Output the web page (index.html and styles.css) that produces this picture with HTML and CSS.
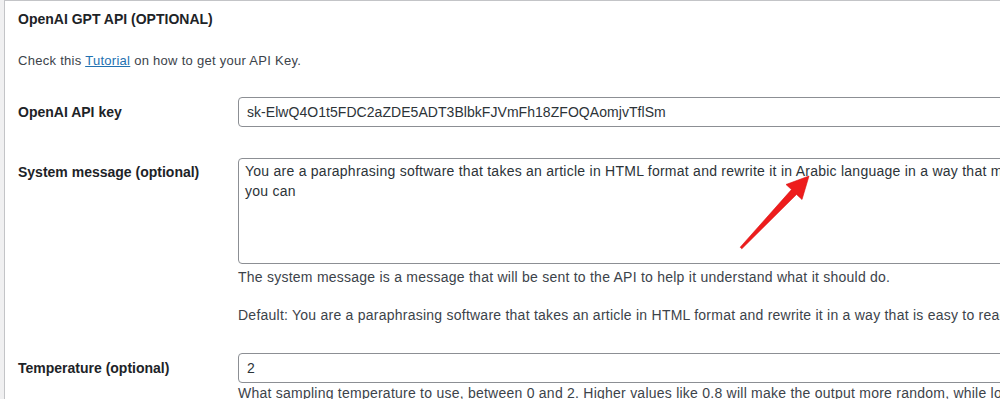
FILE: index.html
```html
<!DOCTYPE html>
<html>
<head>
<meta charset="utf-8">
<link rel="stylesheet" href="styles.css">
</head>
<body>
<div class="page">
  <div class="postbox">
    <h2 class="box-title">OpenAI GPT API (OPTIONAL)</h2>
    <p class="intro">Check this <a href="#">Tutorial</a> on how to get your API Key.</p>
    <div class="form-table">
      <div class="row row-key">
        <div class="label">OpenAI API key</div>
        <div class="field">
          <input class="text-input" type="text" value="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">
        </div>
      </div>
      <div class="row row-system">
        <div class="label label-top">System message (optional)</div>
        <div class="field">
          <textarea class="text-area">You are a paraphrasing software that takes an article in HTML format and rewrite it in Arabic language in a way that makes it easy to read as much as
you can</textarea>
          <p class="description">The system message is a message that will be sent to the API to help it understand what it should do.</p>
          <p class="description description-default">Default: You are a paraphrasing software that takes an article in HTML format and rewrite it in a way that is easy to read as much as you can</p>
        </div>
      </div>
      <div class="row row-temp">
        <div class="label">Temperature (optional)</div>
        <div class="field">
          <input class="text-input" type="text" value="2">
        </div>
      </div>
      <div class="row row-temp-desc">
        <div class="label"></div>
        <div class="field">
          <p class="description description-temp">What sampling temperature to use, between 0 and 2. Higher values like 0.8 will make the output more random, while lower values like 0.2 will make it more focused.</p>
        </div>
      </div>
    </div>
  </div>
  <svg class="annotation" width="1000" height="399" viewBox="0 0 1000 399">
    <polygon points="809,176 786,184.5 791.5,189.6 740.2,247.2 741.8,248.8 796.5,194.4 802,199.5" fill="#ee1c1c" stroke="#d61010" stroke-width="0.6" stroke-linejoin="round"/>
  </svg>
</div>
</body>
</html>
```

FILE: styles.css
```css
html, body {
  margin: 0;
  padding: 0;
}

body {
  background: #f0f0f1;
  font-family: "Liberation Sans", Arial, sans-serif;
  color: #1d2327;
  overflow: hidden;
  width: 1000px;
  height: 399px;
}

.page {
  position: relative;
  width: 1000px;
  height: 399px;
  overflow: hidden;
}

.postbox {
  margin-left: 4px;
  width: 1400px;
  height: 420px;
  background: #fff;
  border: 1px solid #c3c4c7;
  padding-left: 13px;
  box-sizing: border-box;
}

.box-title {
  margin: 0;
  padding-top: 9px;
  font-size: 14px;
  line-height: 19px;
  font-weight: 700;
  color: #1d2327;
}

.intro {
  margin: 23px 0 0;
  font-size: 13px;
  line-height: 18px;
  letter-spacing: 0.28px;
  color: #3c434a;
}

.intro a {
  color: #2271b1;
  text-decoration: underline;
}

.form-table {
  display: flex;
  flex-direction: column;
  margin-top: 27px;
}

.row {
  display: grid;
  grid-template-columns: 220px 1fr;
  align-items: center;
}

.row-system {
  align-items: start;
  margin-top: 31px;
}

.row-temp {
  margin-top: 28px;
}

.label {
  font-size: 14px;
  font-weight: 700;
  line-height: 20px;
  color: #1d2327;
}

.label-top {
  padding-top: 4px;
}

.field {
  display: flex;
  flex-direction: column;
}

.text-input {
  width: 1000px;
  height: 30px;
  box-sizing: border-box;
  border: 1px solid #8c8f94;
  border-radius: 4px;
  padding: 0 8px;
  font-family: "Liberation Sans", Arial, sans-serif;
  font-size: 14px;
  letter-spacing: 0.05px;
  color: #2c3338;
  background: #fff;
  outline: none;
}

.text-area {
  width: 1100px;
  height: 106px;
  box-sizing: border-box;
  border: 1px solid #8c8f94;
  border-radius: 4px;
  padding: 2px 6px;
  font-family: "Liberation Sans", Arial, sans-serif;
  font-size: 14px;
  line-height: 20px;
  letter-spacing: 0.25px;
  color: #2c3338;
  background: #fff;
  resize: none;
  overflow: hidden;
  display: block;
  outline: none;
}

.description {
  margin: 3px 0 0;
  font-size: 14px;
  line-height: 20px;
  letter-spacing: 0.24px;
  color: #3c434a;
  white-space: nowrap;
}

.description-default {
  margin-top: 18px;
}

.description-temp {
  margin-top: 0;
}

.annotation {
  position: absolute;
  left: 0;
  top: 0;
  pointer-events: none;
}
```
